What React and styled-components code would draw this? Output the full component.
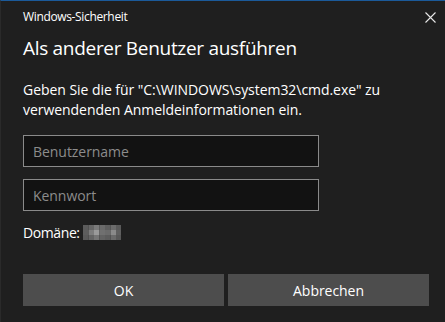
import React from 'react';
import styled, {createGlobalStyle} from 'styled-components';

const GlobalStyle = createGlobalStyle`
    html, body {
        margin: 0;
        padding: 0;
        background: #1f1f1f;
    }
    body {
        font-family: "Open Sans", "Noto Sans", "Liberation Sans", sans-serif;
        color: #ffffff;
    }
`;

// pixelated domain name (blurred in the screenshot)
const mosaic = [
    ['#5b5b5b', '#666666', '#7a7a7a', '#6a6a6a', '#5e5e5e', '#6c6c6c', '#5a5a5a'],
    ['#5d5d5d', '#7d7d7d', '#9a9a9a', '#707070', '#6b6b6b', '#8a8a8a', '#5f5f5f'],
    ['#595959', '#646464', '#767676', '#626262', '#5c5c5c', '#6a6a6a', '#585858'],
];

function CloseIcon() {
    return (
        <svg width="11" height="11" viewBox="0 0 11 11">
            <path d="M0.5 0.5 L10.5 10.5 M10.5 0.5 L0.5 10.5" stroke="#e8e8e8" strokeWidth="1.1" fill="none" />
        </svg>
    );
}

function Mosaic() {
    return (
        <svg width="38" height="15" viewBox="0 0 38 15">
            {mosaic.map((row, r) => row.map((c, i) => (
                <rect key={r + '-' + i} x={i * 5.5} y={r * 5} width="5.5" height="5" fill={c} />
            )))}
        </svg>
    );
}

function App() {
    return (
        <>
            <GlobalStyle />
            <Dialog>
                <TitleBar>
                    <span>Windows-Sicherheit</span>
                    <CloseButton><CloseIcon /></CloseButton>
                </TitleBar>
                <Content>
                    <Heading>Als anderer Benutzer ausführen</Heading>
                    <Message>
                        Geben Sie die für "C:\WINDOWS\system32\cmd.exe" zu verwendenden Anmeldeinformationen ein.
                    </Message>
                    <Field placeholder="Benutzername" />
                    <Field placeholder="Kennwort" type="password" />
                    <Domain>Domäne:<Mosaic /></Domain>
                </Content>
                <Buttons>
                    <Button>OK</Button>
                    <Button>Abbrechen</Button>
                </Buttons>
            </Dialog>
        </>
    );
}

const Dialog = styled.div`
    width: 445px;
    height: 322px;
    box-sizing: border-box;
    background: #1f1f1f;
    border-top: 1px solid #1b5a9a;
    border-left: 1px solid #2a2a2a;
    display: flex;
    flex-direction: column;
`;

const TitleBar = styled.div`
    display: flex;
    align-items: center;
    justify-content: space-between;
    height: 31px;
    padding: 0 8px 0 22px;
    font-size: 12px;
    letter-spacing: -0.35px;
    color: #ffffff;
`;

const CloseButton = styled.div`
    width: 11px;
    height: 11px;
    display: flex;
    margin-top: 2px;
    margin-right: 1px;
`;

const Content = styled.div`
    display: flex;
    flex-direction: column;
    padding: 0 22px;
`;

const Heading = styled.h1`
    margin: 1px 0 0;
    font-size: 19px;
    font-weight: 400;
    line-height: 30px;
    letter-spacing: -0.3px;
`;

const Message = styled.p`
    margin: 17px 0 0;
    font-size: 14px;
    line-height: 20px;
    letter-spacing: -0.05px;
    width: 380px;
`;

const Field = styled.input`
    box-sizing: border-box;
    width: 296px;
    height: 32px;
    margin: 0;
    margin-top: ${p => (p.type === 'password' ? '12px' : '15px')};
    padding: 0 9px;
    background: #121212;
    border: 1px solid #8a8a8a;
    outline: none;
    color: #ffffff;
    font-family: inherit;
    font-size: 14px;
    letter-spacing: -0.05px;
    &::placeholder {
        color: #8c8c8c;
    }
`;

const Domain = styled.div`
    display: flex;
    align-items: center;
    gap: 3px;
    margin-top: 11px;
    font-size: 14px;
    letter-spacing: -0.4px;
    height: 20px;
`;

const Buttons = styled.div`
    display: grid;
    grid-template-columns: 201px 201px;
    column-gap: 4px;
    margin-top: auto;
    margin-bottom: 16px;
    padding-left: 22px;
`;

const Button = styled.button`
    height: 32px;
    border: none;
    background: #4d4d4d;
    color: #ffffff;
    font-family: inherit;
    font-size: 14px;
    letter-spacing: -0.05px;
    padding: 0;
`;

export default App;
